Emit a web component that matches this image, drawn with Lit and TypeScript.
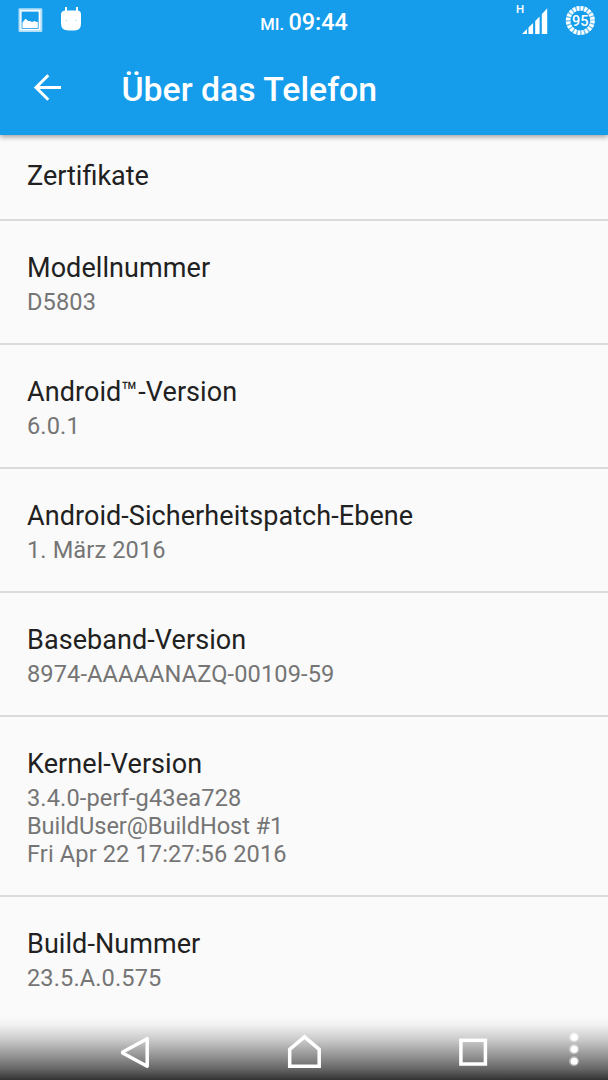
import { LitElement, html, css, svg } from "lit";
import { customElement } from "lit/decorators.js";

interface Entry {
  title: string;
  lines: string[];
}

const entries: Entry[] = [
  { title: "Zertifikate", lines: [] },
  { title: "Modellnummer", lines: ["D5803"] },
  { title: "Android™-Version", lines: ["6.0.1"] },
  { title: "Android-Sicherheitspatch-Ebene", lines: ["1. März 2016"] },
  { title: "Baseband-Version", lines: ["8974-AAAAANAZQ-00109-59"] },
  {
    title: "Kernel-Version",
    lines: ["3.4.0-perf-g43ea728", "BuildUser@BuildHost #1", "Fri Apr 22 17:27:56 2016"],
  },
  { title: "Build-Nummer", lines: ["23.5.A.0.575"] },
];

@customElement("status-bar")
export class StatusBar extends LitElement {
  static styles = css`
    :host {
      display: grid;
      grid-template-columns: 1fr auto 1fr;
      height: 42px;
      color: #fff;
    }
    svg { display: block; }
    .right { justify-self: end; }
    .clock {
      font-size: 23.4px;
      font-weight: 500;
      line-height: 44px;
      white-space: nowrap;
    }
    .day { font-size: 16.6px; margin-right: -1.4px; }
    .badge { font: 500 14.5px Roboto, sans-serif; }
    .net { font: 500 11.5px Roboto, sans-serif; }
  `;

  render() {
    return html`
      <svg width="100" height="42" viewBox="0 0 100 42">
        <rect x="18.5" y="8.3" width="23.8" height="23.7" rx="1.2" fill="#fff" fill-opacity=".68" />
        <rect x="20.300" y="10.200" width="20" height="20" fill="#fff" />
        <rect x="22" y="12" width="16.200" height="16.500" fill="#fff" stroke="#159deb" stroke-width=".8" />
        <path fill="#159deb" d="M22 12h16.200v9.500l-1.500.6-2.200-1.200-2.500 1.200-2-1.200-1.800.2-2.700-2.300-2.200 2.800L22 23z" />
      <path fill="#fff" d="M65 7h2v3.500h9V7h2v3.500q3 .7 3 4v9q0 7-6.500 7h-6Q61 30.500 61 23.500v-9q0-3.500 4-4z" />
        <circle cx="66.400" cy="20.300" r=".6" fill="#8bcdf4" />
        <circle cx="76" cy="20.300" r=".6" fill="#8bcdf4" />
      </svg>
      <div class="clock"><span class="day">MI.</span> 09:44</div>
      <svg class="right" width="108" height="42" viewBox="0 0 108 42">
        <text class="net" x="16" y="13.300" fill="#fff">H</text>
        <path fill="#fff" d="M22 34l5-5v5zM28.500 27.500l4.600-4.600V34h-4.600zM35.200 21l4.400-4.400V34h-4.400zM41.800 14.200L47.200 8.300V34h-5.400z" />
        <circle cx="80.300" cy="20.500" r="12.200" fill="none" stroke="#fff" stroke-opacity=".35" stroke-width="4.600" />
        <circle cx="80.300" cy="20.500" r="12.200" fill="none" stroke="#fff" stroke-width="4.600" stroke-dasharray="2.500 1.333" />
        <text class="badge" x="80.300" y="25.800" text-anchor="middle" fill="#fff">95</text>
      </svg>
    `;
  }
}

@customElement("title-bar")
export class TitleBar extends LitElement {
  static styles = css`
    :host {
      display: flex;
      align-items: flex-start;
      height: 93px;
      color: #fff;
    }
    .back { display: block; margin: 30px 56.5px 0 31px; }
    .heading {
      margin: 0;
      padding-top: 28px;
      font-size: 33.8px;
      font-weight: 500;
      line-height: 40px;
      white-space: nowrap;
    }
  `;

  render() {
    return html`
      <svg class="back" width="34" height="34" viewBox="0 0 34 34" fill="none" stroke="#fff" stroke-width="3">
        <path d="M30 15.500H5M17.300 3.200L5 15.500l12.300 12.300" />
      </svg>
      <h1 class="heading">Über das Telefon</h1>
    `;
  }
}

@customElement("nav-bar")
export class NavBar extends LitElement {
  static styles = css`
    :host {
      display: block;
      height: 66px;
      background: linear-gradient(
        rgba(0, 0, 0, 0) 4%,
        rgba(0, 0, 0, 0.04) 17%,
        rgba(0, 0, 0, 0.2) 40%,
        rgba(0, 0, 0, 0.45) 68%,
        rgba(0, 0, 0, 0.6) 84%,
        rgba(0, 0, 0, 0.8) 100%
      );
    }
    svg { display: block; }
  `;

  render() {
    return html`
      <svg width="608" height="66" viewBox="0 0 608 66" fill="none" stroke="#fff" stroke-width="3.500">
        <path stroke-linejoin="round" d="M147.200 24.700v27.600l-24.500-13.300v-1z" />
        <path d="M289.700 52.200V35.400l14.800-12.500 14.700 12.500v16.800z" />
        <rect x="460.900" y="26.300" width="24.500" height="23.700" />
        ${[23.3, 35.3, 47.3].map(
          (y) => svg`
            <circle cx="574" cy=${y} r="5" fill="#fff" fill-opacity=".4" stroke="none" />
            <circle cx="574.200" cy=${y} r="3.500" fill="#fff" stroke="none" />`
        )}
      </svg>
    `;
  }
}

@customElement("app-root")
export class AppRoot extends LitElement {
  static styles = css`
    :host {
      display: grid;
      grid-template-rows: 135px 1fr;
      position: relative;
      height: 1080px;
      overflow: hidden;
      background: #fafafa;
      font-family: Roboto, sans-serif;
    }
    .header {
      z-index: 1;
      background: #159deb;
      box-shadow: 0 2px 5px rgba(0, 0, 0, 0.36);
    }
    .row {
      padding: 30px 27px 27px;
      border-bottom: 2px solid #dbdbdb;
    }
    .row.single { padding: 24px 27px 26px; }
    .row:last-child { border-bottom: none; }
    .title {
      font-size: 27px;
      line-height: 34px;
      letter-spacing: 0.07px;
      color: #212121;
    }
    .single .title { letter-spacing: normal; }
    .summary {
      padding-top: 3px;
      font-size: 23.6px;
      line-height: 28px;
      letter-spacing: 0.11px;
      color: #757575;
    }
    .summary .address { letter-spacing: -0.08px; }
    .nav {
      position: absolute;
      left: 0;
      right: 0;
      bottom: 0;
    }
  `;

  render() {
    return html`
      <header class="header">
        <status-bar></status-bar>
        <title-bar></title-bar>
      </header>
      <main>
        ${entries.map(
          (e) => html`
            <section class="row ${e.lines.length ? "" : "single"}">
              <div class="title">${e.title}</div>
              ${e.lines.length
                ? html`<div class="summary">
                    ${e.lines.map((l) => html`<div class=${l.includes("@") ? "address" : "line"}>${l}</div>`)}
                  </div>`
                : null}
            </section>
          `
        )}
      </main>
      <nav-bar class="nav"></nav-bar>
    `;
  }
}
